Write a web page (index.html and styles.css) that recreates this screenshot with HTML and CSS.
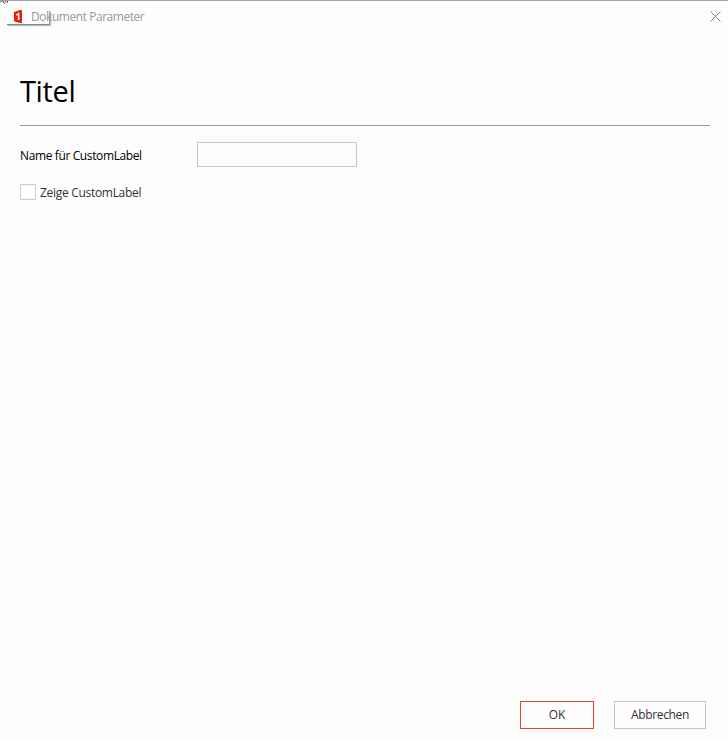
FILE: index.html
```html
<!DOCTYPE html>
<html lang="de">
<head>
<meta charset="utf-8">
<title>Dokument Parameter</title>
<link rel="stylesheet" href="styles.css">
</head>
<body>
<div class="dialog">
  <svg class="cursor" width="12" height="5" viewBox="0 0 12 5" aria-hidden="true"><path d="M0 2.500L2 .5L4.500 3.500M4 0l2 2.500M7.500 1v1.500" fill="none" stroke="#333"/></svg>
  <header class="titlebar">
    <span class="tab-shadow"></span>
    <svg class="logo" width="9" height="15" viewBox="0 0 9 15" aria-hidden="true"><path d="M0 3L6.200 1H8v13H6.200L0 12.200z" fill="#e62000"/><path d="M2.300 6.200L4.600 4.700V11" fill="none" stroke="#fff" stroke-width="1.600"/></svg>
    <span class="caption">Dokument Parameter</span>
    <svg class="close" width="11" height="11" viewBox="0 0 11 11" aria-label="Schließen"><path d="M.5.5l10 10M10.500.5l-10 10" stroke="#888" stroke-width="1"/></svg>
  </header>
  <main class="content">
    <h1>Titel</h1>
    <div class="field">
      <label class="field-label" for="name">Name für CustomLabel</label>
      <input id="name" class="textbox" type="text">
    </div>
    <label class="check"><input type="checkbox" class="box"><span class="check-text">Zeige CustomLabel</span></label>
  </main>
  <footer class="actions">
    <button class="btn ok">OK</button>
    <button class="btn cancel">Abbrechen</button>
  </footer>
</div>
</body>
</html>
```
FILE: styles.css
```css
* { box-sizing: border-box; }
body { margin: 0; font: 12px/16px "Open Sans", "Noto Sans", sans-serif; color: #333; }
.dialog { position: relative; width: 728px; height: 740px; background: #fdfdfd; border-top: 1px solid #a3a3a3; display: flex; flex-direction: column; overflow: hidden; }
.cursor { position: absolute; left: 0; top: -1px; }
.titlebar { position: relative; height: 32px; padding: 0 7px 0 14px; display: flex; align-items: center; }
.tab-shadow { position: absolute; left: 7px; top: 10px; width: 43px; height: 14px; border-right: 1px solid #999; border-bottom: 1px solid #888; box-shadow: 1px 1px 1px #bbb; }
.logo { flex: none; margin-top: -2px; }
.caption { position: relative; margin-left: 8px; color: #999; letter-spacing: -0.45px; }
.close { margin-left: auto; margin-top: -2px; }
.content { flex: 1; padding: 0 18px 0 20px; display: flex; flex-direction: column; align-items: flex-start; }
h1 { margin: 0 0 16px; align-self: stretch; height: 93px; padding-top: 38px; border-bottom: 1px solid #999; color: #000; font-size: 29px; line-height: 40px; font-weight: 400; letter-spacing: -0.35px; }
.field { display: flex; align-items: center; height: 25px; }
.field-label { width: 177px; padding-top: 2px; color: #000; letter-spacing: -0.38px; }
.textbox { width: 160px; height: 25px; margin: 0; padding: 0 4px; border: 1px solid #c6c6c6; border-radius: 0; background: #fefefe; font: inherit; outline: 0; }
.check { display: flex; align-items: flex-start; gap: 4px; margin-top: 17px; letter-spacing: -0.3px; }
.box { appearance: none; width: 16px; height: 16px; margin: 0; border: 1px solid #ccc; background: #fefefe; }
.check-text { padding-top: 1px; }
.actions { display: flex; justify-content: flex-end; gap: 20px; padding: 0 22px 11px 0; }
.btn { height: 28px; margin: 0; padding: 0; border: 1px solid #c6c6c6; border-radius: 0; background: #fefefe; font: inherit; color: #333; letter-spacing: -0.35px; }
.ok { width: 74px; border-color: #e8432e; letter-spacing: 0; }
.cancel { width: 92px; }
```
